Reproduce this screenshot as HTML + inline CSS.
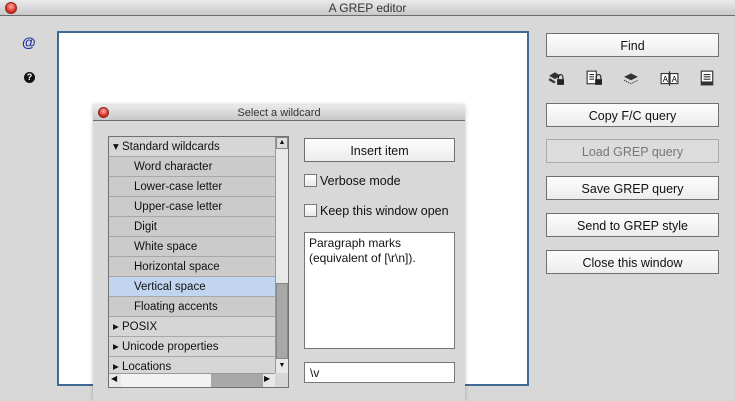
<!DOCTYPE html><html><head><style>
*{box-sizing:border-box;margin:0;padding:0}
body{width:735px;height:401px;background:#d8d8d8;font-family:"Liberation Sans",sans-serif;font-size:12px;color:#111;position:relative;overflow:hidden}
.a{position:absolute}
.tb{background:linear-gradient(#eaeaea,#c8c8c8);border-bottom:1px solid #6d6d6d;text-align:center;color:#333}
.dot{position:absolute;width:12px;height:12px;border-radius:50%;background:radial-gradient(circle at 50% 35%,#ffb0a8,#e0302a 60%,#a01810);border:1px solid #8a2a20}
.btn{position:absolute;background:linear-gradient(#fdfdfd,#ececec);border:1px solid #707070;text-align:center;font-size:12.5px;line-height:24px}
.row{height:20px;line-height:21px;border-bottom:1px solid #a8a8a8;font-size:11.5px}
.sub{background:#cbcbcb;padding-left:25px}
.hd{background:#d6d6d6;padding-left:4px}
.cb{position:absolute;width:13px;height:13px;border:1px solid #777;background:linear-gradient(#fff,#e8e8e8)}
.ic{position:absolute;top:70px;width:16px;height:16px}
</style></head><body>
<div class="a tb" style="left:0;top:0;width:735px;height:16px;line-height:16px;font-size:12px">A GREP editor</div>
<div class="dot" style="left:5px;top:2px"></div>
<div class="a" style="left:22px;top:34px;color:#1a2fa0;font-size:14px;font-weight:bold">@</div>
<div class="a" style="left:24px;top:72px;width:11px;height:11px;border-radius:50%;background:#111;color:#fff;font-size:9px;font-weight:bold;text-align:center;line-height:11px">?</div>
<div class="a" style="left:57px;top:31px;width:472px;height:355px;background:#fff;border:2px solid #3e6a93"></div>

<div class="btn" style="left:546px;top:33px;width:173px;height:24px">Find</div>
<svg class="ic" style="left:548px" viewBox="0 0 14 14"><path d="M1 5l5-3 5 3-5 3z" fill="#333"/><path d="M1 8l5 3" stroke="#333" stroke-width="2"/><rect x="8" y="8" width="6" height="5" fill="#222"/><path d="M9 8V6a2 2 0 014 0v2" stroke="#222" fill="none"/></svg>
<svg class="ic" style="left:586px" viewBox="0 0 14 14"><rect x="1" y="1" width="8" height="11" fill="#fff" stroke="#333"/><path d="M3 4h4M3 6h4M3 8h4" stroke="#333"/><rect x="8" y="8" width="6" height="5" fill="#222"/><path d="M9 8V6a2 2 0 014 0v2" stroke="#222" fill="none"/></svg>
<svg class="ic" style="left:623px" viewBox="0 0 14 14"><path d="M1 6l6-3 6 3-6 3z" fill="#333"/><path d="M1 9l6 3 6-3" stroke="#333" stroke-dasharray="1 1" fill="none"/></svg>
<svg class="ic" style="left:660px;width:19px" viewBox="0 0 17 14"><rect x="1" y="3" width="7" height="9" fill="#fff" stroke="#333"/><rect x="9" y="3" width="7" height="9" fill="#fff" stroke="#333"/><path d="M8.5 1v13" stroke="#333"/><text x="2.5" y="10.5" font-size="7" font-family="Liberation Sans">A</text><text x="10.5" y="10.5" font-size="7" font-family="Liberation Sans">A</text></svg>
<svg class="ic" style="left:699px" viewBox="0 0 14 14"><rect x="2" y="1" width="10" height="12" fill="#fff" stroke="#333"/><path d="M4 4h6M4 6h6M4 8h6" stroke="#333"/><rect x="2" y="10" width="10" height="3" fill="#333"/></svg>
<div class="btn" style="left:546px;top:103px;width:173px;height:24px">Copy F/C query</div>
<div class="btn" style="left:546px;top:139px;width:173px;height:24px;border-color:#aaa;color:#777;background:#dcdcdc">Load GREP query</div>
<div class="btn" style="left:546px;top:176px;width:173px;height:24px">Save GREP query</div>
<div class="btn" style="left:546px;top:213px;width:173px;height:24px">Send to GREP style</div>
<div class="btn" style="left:546px;top:250px;width:173px;height:24px">Close this window</div>

<div class="a" style="left:93px;top:105px;width:372px;height:296px;background:#d8d8d8;box-shadow:0 0 4px rgba(0,0,0,.25)">
<div class="a tb" style="left:0;top:0;width:372px;height:16px;line-height:17px;font-size:11px">Select a wildcard</div>
<div class="dot" style="left:5px;top:2px;width:11px;height:11px"></div>
</div>
<div class="a" style="left:108px;top:136px;width:181px;height:252px;border:1px solid #707070;background:#d6d6d6;overflow:hidden">
<div class="a" style="left:0;top:0;width:166px">
<div class="row hd">▾ Standard wildcards</div>
<div class="row sub">Word character</div>
<div class="row sub">Lower-case letter</div>
<div class="row sub">Upper-case letter</div>
<div class="row sub">Digit</div>
<div class="row sub">White space</div>
<div class="row sub">Horizontal space</div>
<div class="row sub" style="background:#c2d5f0">Vertical space</div>
<div class="row sub">Floating accents</div>
<div class="row hd">▸ POSIX</div>
<div class="row hd">▸ Unicode properties</div>
<div class="row hd">▸ Locations</div>
</div>
<div class="a" style="left:166px;top:0;width:13px;height:236px;background:#e8e8e8;border-left:1px solid #999"></div>
<div class="a" style="left:167px;top:0;width:12px;height:12px;background:#ddd;border:1px solid #888;font-size:7px;text-align:center;line-height:10px">▲</div>
<div class="a" style="left:167px;top:146px;width:12px;height:76px;background:#a8a8a8;border:1px solid #888"></div>
<div class="a" style="left:167px;top:222px;width:12px;height:13px;font-size:7px;text-align:center;line-height:13px">▼</div>
<div class="a" style="left:0;top:236px;width:166px;height:14px;background:#e8e8e8;border-top:1px solid #999"></div>
<div class="a" style="left:12px;top:237px;width:90px;height:13px;background:#f2f2f2"></div>
<div class="a" style="left:102px;top:237px;width:52px;height:13px;background:#a8a8a8"></div>
<div class="a" style="left:2px;top:237px;font-size:8px">◀</div>
<div class="a" style="left:155px;top:237px;font-size:8px">▶</div>
</div>
<div class="btn" style="left:304px;top:138px;width:151px;height:24px">Insert item</div>
<div class="cb" style="left:304px;top:174px"></div><div class="a" style="left:320px;top:174px;font-size:12.5px">Verbose mode</div>
<div class="cb" style="left:304px;top:204px"></div><div class="a" style="left:320px;top:204px;font-size:12.5px">Keep this window open</div>
<div class="a" style="left:304px;top:232px;width:151px;height:117px;background:#fff;border:1px solid #777;padding:3px 4px;font-size:12px;line-height:15px">Paragraph marks (equivalent of [\r\n]).</div>
<div class="a" style="left:304px;top:362px;width:151px;height:21px;background:#fff;border:1px solid #777;padding:3px 5px;font-size:12px">\v</div>
</body></html>
